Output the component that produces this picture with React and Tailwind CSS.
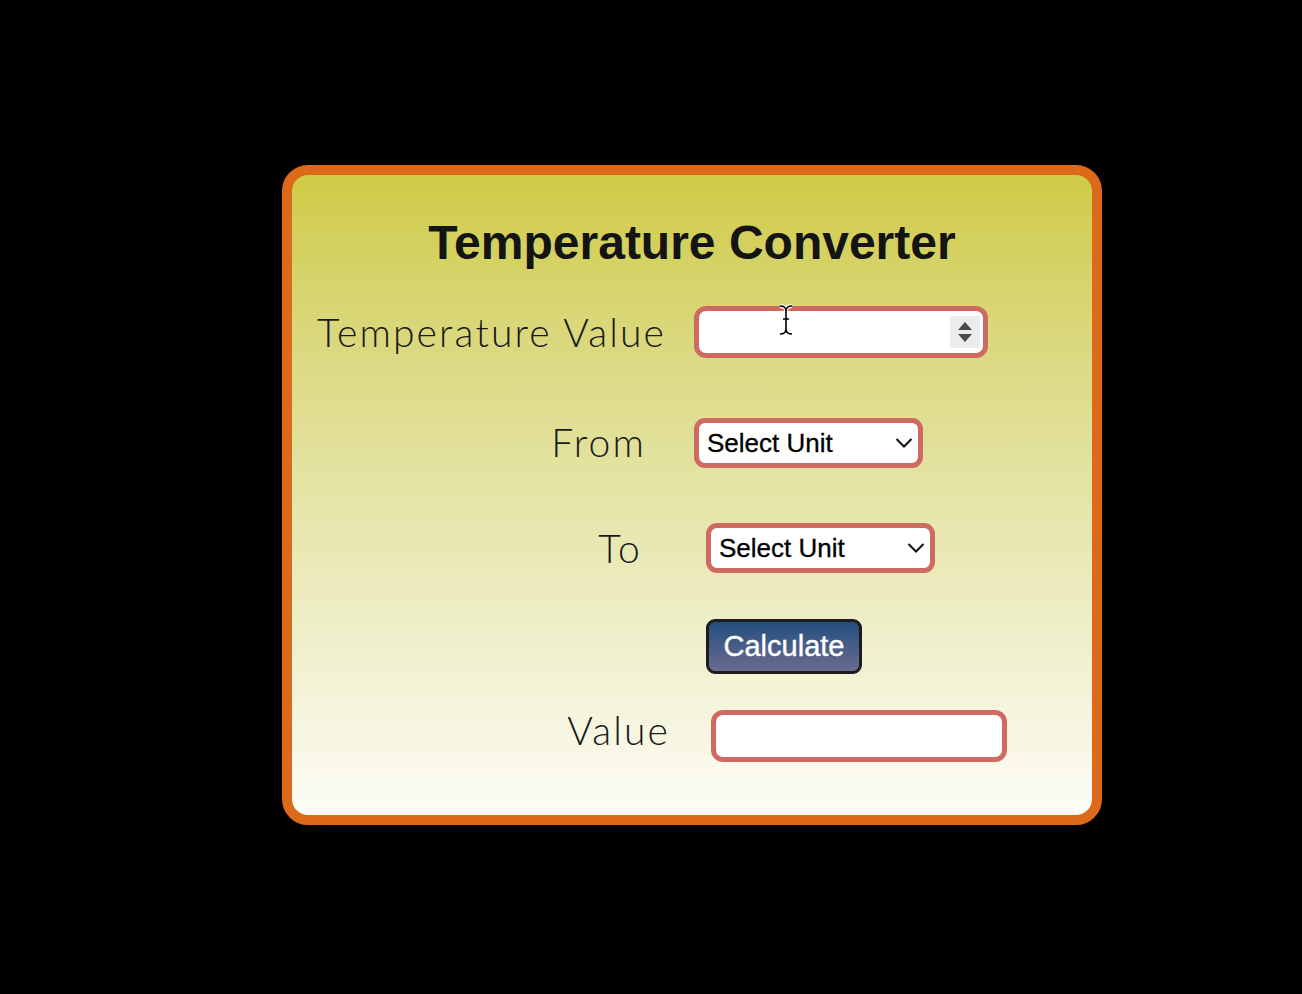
import { useState } from 'react';

function Spinner() {
  return (
    <div className="absolute right-[8px] top-1/2 -translate-y-1/2 w-[30px] h-[32px] bg-[#ececec] flex flex-col items-center justify-center gap-[4px]">
      <svg width="14" height="8" viewBox="0 0 14 8"><path d="M7 0 L14 8 L0 8 Z" fill="#4a4a4a" /></svg>
      <svg width="14" height="8" viewBox="0 0 14 8"><path d="M0 0 L14 0 L7 8 Z" fill="#4a4a4a" /></svg>
    </div>
  );
}

function Chevron() {
  return (
    <svg className="pointer-events-none absolute right-[10px] top-1/2 -translate-y-1/2" width="18" height="11" viewBox="0 0 18 11">
      <path d="M1.5 1.5 L9 9 L16.5 1.5" fill="none" stroke="#111" strokeWidth="2" />
    </svg>
  );
}

function UnitSelect({ value, onChange }) {
  return (
    <div className="relative w-[229px] h-[50px]">
      <select
        value={value}
        onChange={(e) => onChange(e.target.value)}
        className="appearance-none w-full h-full bg-white border-[5px] border-[#cf6a62] rounded-[11px] pl-[8px] pr-8 text-[26px] text-black font-['Liberation_Sans',Arial,sans-serif] outline-none [-webkit-text-stroke:0.3px_#000]"
      >
        <option value="">Select Unit</option>
        <option value="c">Celsius</option>
        <option value="f">Fahrenheit</option>
        <option value="k">Kelvin</option>
      </select>
      <Chevron />
    </div>
  );
}

const label = "text-right text-[39px] font-light text-[#1a1a1a] tracking-[0.055em] font-['Lato','Open_Sans',sans-serif] leading-none";

export default function App() {
  const [temp, setTemp] = useState('');
  const [from, setFrom] = useState('');
  const [to, setTo] = useState('');
  const [result, setResult] = useState('');

  const calculate = () => {
    const t = parseFloat(temp);
    if (isNaN(t) || !from || !to) return;
    let c = from === 'c' ? t : from === 'f' ? (t - 32) * 5 / 9 : t - 273.15;
    let out = to === 'c' ? c : to === 'f' ? c * 9 / 5 + 32 : c + 273.15;
    setResult(out.toFixed(2));
  };

  return (
    <div className="min-h-screen bg-black pt-[165px] pl-[282px]">
      <div className="w-[820px] h-[660px] border-[10px] border-[#dc6a1a] rounded-[26px] bg-gradient-to-b from-[#cfcb45] to-[#fdfcf6] flex flex-col">
        <h1 className="mt-[40px] h-[56px] leading-[56px] text-center text-[48px] font-bold text-[#141414] font-['Liberation_Sans',Arial,sans-serif]">
          Temperature Converter
        </h1>

        <div className="mt-[35px] flex items-center">
          <div className={`w-[374px] ${label}`}>Temperature Value</div>
          <div className="relative ml-[28px] w-[294px] h-[52px]">
            <input
              type="number"
              value={temp}
              onChange={(e) => setTemp(e.target.value)}
              className="w-full h-full bg-white border-[5px] border-[#cf6a62] rounded-[12px] px-3 text-[24px] outline-none [appearance:textfield] [&::-webkit-inner-spin-button]:appearance-none"
            />
            <Spinner />
            <svg className="pointer-events-none absolute left-[85px] top-[-2px]" width="14" height="32" viewBox="0 0 14 32">
              <path d="M1 2 Q7 2 7 7 Q7 2 13 2 M7 7 L7 25 M4 15 L10 15 M1 30 Q7 30 7 25 Q7 30 13 30" fill="none" stroke="#fff" strokeWidth="4" />
              <path d="M1 2 Q7 2 7 7 Q7 2 13 2 M7 7 L7 25 M4 15 L10 15 M1 30 Q7 30 7 25 Q7 30 13 30" fill="none" stroke="#000" strokeWidth="1.6" />
            </svg>
          </div>
        </div>

        <div className="mt-[60px] flex items-center">
          <div className={`w-[354px] -mt-[2px] ${label}`}>From</div>
          <div className="ml-[48px]">
            <UnitSelect value={from} onChange={setFrom} />
          </div>
        </div>

        <div className="mt-[55px] flex items-center">
          <div className={`w-[350px] ${label}`}>To</div>
          <div className="ml-[64px]">
            <UnitSelect value={to} onChange={setTo} />
          </div>
        </div>

        <div className="mt-[46px] pl-[414px]">
          <button
            onClick={calculate}
            className="w-[156px] h-[55px] rounded-[9px] border-[3px] border-[#1c1c1c] bg-gradient-to-b from-[#1f4e80] to-[#6b6b8f] text-white text-[29px] font-['Liberation_Sans',Arial,sans-serif] leading-none [-webkit-text-stroke:0.4px_#fff]"
          >
            Calculate
          </button>
        </div>

        <div className="mt-[36px] flex items-center">
          <div className={`w-[378px] -mt-[12px] ${label}`}>Value</div>
          <input
            readOnly
            value={result}
            className="ml-[41px] w-[296px] h-[52px] bg-white border-[5px] border-[#cf6a62] rounded-[12px] px-3 text-[24px] outline-none"
          />
        </div>
      </div>
    </div>
  );
}
